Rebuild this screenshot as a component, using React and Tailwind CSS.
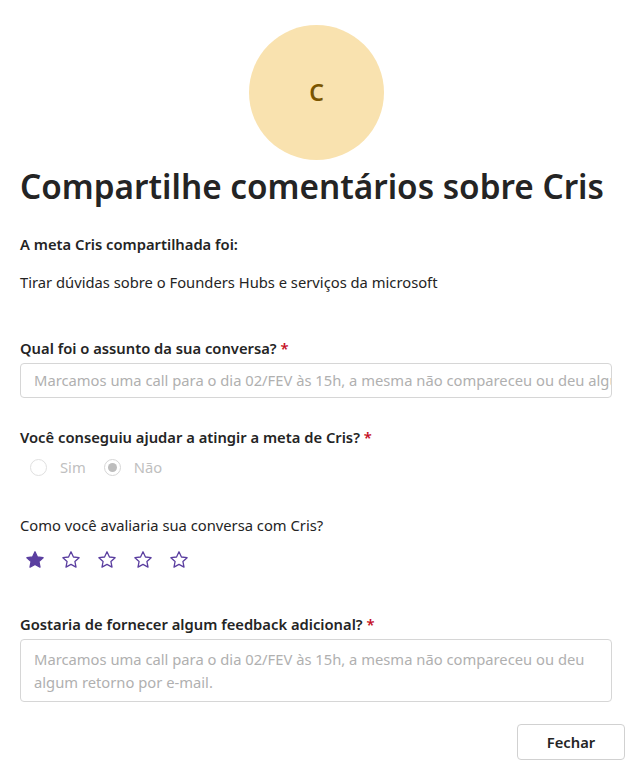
import React from "react";

const Star = ({ filled }) => (
  <svg width="20" height="20" viewBox="0 0 20 20" className="block">
    <path
      d="M10 1.8l2.45 5.2 5.65.68-4.17 3.9 1.08 5.6L10 14.4l-5.01 2.78 1.08-5.6L1.9 7.68l5.65-.68L10 1.8z"
      fill={filled ? "#5b3fa0" : "none"}
      stroke="#5b3fa0"
      strokeWidth="1.3"
      strokeLinejoin="round"
    />
  </svg>
);

export default function App() {
  const font = { fontFamily: '"Noto Sans", "Open Sans", Arial, sans-serif' };
  return (
    <div className="w-[633px] h-[766px] bg-white text-[#242424] overflow-hidden" style={font}>
      <div className="flex justify-center pt-[25px]">
        <div className="w-[135px] h-[135px] rounded-full bg-[#f9e2af] flex items-center justify-center">
          <span className="text-[23px] font-semibold text-[#7a5500]">C</span>
        </div>
      </div>
      <div className="px-5">
        <h1 className="mt-[2px] text-[33.3px] leading-[48px] font-semibold text-[#242424] whitespace-nowrap">
          Compartilhe comentários sobre Cris
        </h1>
        <p className="mt-[24px] text-[14.75px] leading-[20px] font-semibold">A meta Cris compartilhada foi:</p>
        <p className="mt-[18px] text-[14.75px] leading-[20px]">Tirar dúvidas sobre o Founders Hubs e serviços da microsoft</p>

        <p className="mt-[46px] text-[14.75px] leading-[20px] font-semibold">
          Qual foi o assunto da sua conversa? <span className="text-[#c50f1f]">*</span>
        </p>
        <div className="mt-[5px] w-[592px] h-[35px] border border-[#d6d6d6] rounded-[4px] px-[13px] flex items-center overflow-hidden">
          <span className="text-[14.75px] text-[#b0b0b0] whitespace-nowrap">
            Marcamos uma call para o dia 02/FEV às 15h, a mesma não compareceu ou deu algum retorno por e-mail.
          </span>
        </div>

        <p className="mt-[29px] text-[14.75px] leading-[20px] font-semibold">
          Você conseguiu ajudar a atingir a meta de Cris? <span className="text-[#c50f1f]">*</span>
        </p>
        <div className="mt-[9px] flex items-center text-[14.75px] text-[#c0c0c0]">
          <div className="flex items-center ml-[10px]">
            <span className="w-[17px] h-[17px] rounded-full border border-[#e0e0e0]" />
            <span className="ml-[13px]">Sim</span>
          </div>
          <div className="flex items-center ml-[18px]">
            <span className="w-[17px] h-[17px] rounded-full border border-[#d6d6d6] flex items-center justify-center">
              <span className="w-[9px] h-[9px] rounded-full bg-[#bdbdbd]" />
            </span>
            <span className="ml-[13px]">Não</span>
          </div>
        </div>

        <p className="mt-[37px] text-[14.75px] leading-[20px]">Como você avaliaria sua conversa com Cris?</p>
        <div className="mt-[15px] ml-[5px] flex gap-[16px]">
          <Star filled />
          <Star />
          <Star />
          <Star />
          <Star />
        </div>

        <p className="mt-[44px] text-[14.75px] leading-[20px] font-semibold">
          Gostaria de fornecer algum feedback adicional? <span className="text-[#c50f1f]">*</span>
        </p>
        <div className="mt-[5px] w-[592px] h-[63px] border border-[#d6d6d6] rounded-[4px] px-[13px] pt-[8px]">
          <p className="text-[14.75px] leading-[23px] text-[#b0b0b0]">
            Marcamos uma call para o dia 02/FEV às 15h, a mesma não compareceu ou deu algum retorno por e-mail.
          </p>
        </div>
      </div>
      <div className="flex justify-end pr-[8px] mt-[22px]">
        <button className="w-[108px] h-[36px] border border-[#d1d1d1] rounded-[4px] text-[14.75px] font-semibold text-[#242424] bg-white">
          Fechar
        </button>
      </div>
    </div>
  );
}
